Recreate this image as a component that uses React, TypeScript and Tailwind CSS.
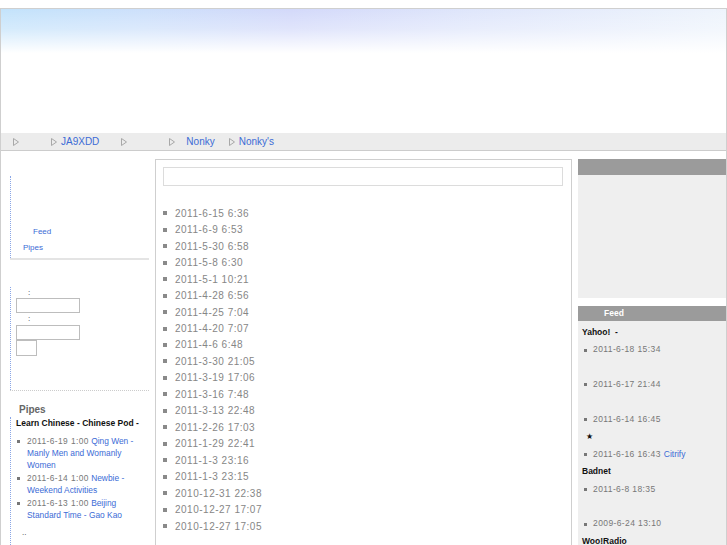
import React from "react";

const centerDates = [
  "2011-6-15 6:36",
  "2011-6-9 6:53",
  "2011-5-30 6:58",
  "2011-5-8 6:30",
  "2011-5-1 10:21",
  "2011-4-28 6:56",
  "2011-4-25 7:04",
  "2011-4-20 7:07",
  "2011-4-6 6:48",
  "2011-3-30 21:05",
  "2011-3-19 17:06",
  "2011-3-16 7:48",
  "2011-3-13 22:48",
  "2011-2-26 17:03",
  "2011-1-29 22:41",
  "2011-1-3 23:16",
  "2011-1-3 23:15",
  "2010-12-31 22:38",
  "2010-12-27 17:07",
  "2010-12-27 17:05",
];

function Tri() {
  return (
    <svg width="6" height="8" viewBox="0 0 6 8" className="shrink-0">
      <polygon points="0.5,0.5 5.5,4 0.5,7.5" fill="none" stroke="#a8a8a8" strokeWidth="1" />
    </svg>
  );
}

export default function App() {
  return (
    <div className="w-[727px] h-[545px] overflow-hidden bg-white pt-[8px] font-['Liberation_Sans',Arial,sans-serif]">
      <div className="border border-[#cfcfcf] h-[600px]">
        {/* header */}
        <div className="h-[124px] bg-[linear-gradient(to_bottom,rgba(255,255,255,0)_0px,rgba(255,255,255,0.3)_20px,#ffffff_44px),linear-gradient(to_right,#c3e3fb_0%,#cde0fb_20%,#d3d9fa_40%,#dfe6fb_65%,#eef4fc_100%)]" />
        {/* nav */}
        <div className="h-[18px] bg-[#ececec] border-b border-[#cccccc] flex items-center text-[10px] text-[#3b6bd6]">
          <span className="ml-[12px]"><Tri /></span>
          <span className="ml-[32px] flex items-center gap-[4px]"><Tri /><span>JA9XDD</span></span>
          <span className="ml-[22px]"><Tri /></span>
          <span className="ml-[42px]"><Tri /></span>
          <span className="ml-[11px]">Nonky</span>
          <span className="ml-[14px] flex items-center gap-[4px]"><Tri /><span>Nonky's</span></span>
        </div>
        {/* body */}
        <div className="flex">
          {/* left column */}
          <div className="w-[154px] shrink-0">
            <div className="mt-[25px] ml-[9px] w-[139px] border-b-2 border-[#e4e4e4]">
              <div className="h-[82px] border-l border-dotted border-[#8aa6e6] pt-[48px] text-[8px] leading-[16px] text-[#3b6bd6]">
                <div className="pl-[22px]">Feed</div>
                <div className="pl-[12px]">Pipes</div>
              </div>
            </div>
            <div className="mt-[27px] ml-[9px] w-[139px] border-b border-dotted border-[#cccccc]">
              <div className="h-[103px] border-l border-dotted border-[#8aa6e6] pt-[1px] text-[8px] text-[#333]">
                <div className="pl-[17px] leading-[10px]">:</div>
                <div className="ml-[5px] w-[64px] h-[15px] border border-[#bdbdbd]" />
                <div className="pl-[17px] leading-[12px]">:</div>
                <div className="ml-[5px] w-[64px] h-[15px] border border-[#bdbdbd]" />
                <div className="ml-[5px] w-[21px] h-[16px] border border-[#bdbdbd]" />
              </div>
            </div>
            <div className="mt-[12px] ml-[18px] text-[10px] font-bold text-[#666] leading-[14px]">Pipes</div>
            <div className="ml-[9px] border-l border-dotted border-[#8aa6e6] h-[200px] pl-[5px]">
              <div className="text-[8.5px] font-bold text-[#111] leading-[12px]">Learn Chinese - Chinese Pod -</div>
              <div className="mt-[6px] w-[118px] flex flex-col gap-[1px]">
                {[
                  ["2011-6-19 1:00", "Qing Wen - Manly Men and Womanly Women"],
                  ["2011-6-14 1:00", "Newbie - Weekend Activities"],
                  ["2011-6-13 1:00", "Beijing Standard Time - Gao Kao"],
                ].map(([d, t]) => (
                  <div key={d} className="flex items-start">
                    <span className="ml-[1px] mt-[5px] w-[3px] h-[3px] bg-[#777] shrink-0" />
                    <p className="ml-[7px] text-[8.4px] leading-[12px]">
                      <span className="text-[#777] tracking-[0.4px]">{d}</span>{" "}
                      <span className="text-[#3b6bd6]">{t}</span>
                    </p>
                  </div>
                ))}
              </div>
              <div className="mt-[6px] pl-[6px] text-[8px] text-[#333] leading-[12px]">..</div>
            </div>
          </div>
          {/* center */}
          <div className="mt-[8px] w-[417px] shrink-0 border border-[#cfcfcf] h-[420px] px-[7px] pt-[7px]">
            <div className="w-[400px] h-[19px] border border-[#dcdcdc]" />
            <div className="mt-[19px] flex flex-col">
              {centerDates.map((d, i) => (
                <div key={i} className="flex items-center h-[16.47px]">
                  <span className="w-[4px] h-[4px] bg-[#8a8a8a] shrink-0" />
                  <span className="ml-[8px] text-[10px] tracking-[0.5px] text-[#868686]">{d}</span>
                </div>
              ))}
            </div>
          </div>
          {/* right column */}
          <div className="ml-[6px] w-[148px] shrink-0 mt-[8px]">
            <div className="h-[16px] bg-[#9b9b9b]" />
            <div className="h-[123px] bg-[#efefef]" />
            <div className="mt-[8px] h-[15px] bg-[#9b9b9b] text-white font-bold text-[8.5px] leading-[15px] pl-[26px]">Feed</div>
            <div className="bg-[#efefef] h-[300px] pl-[4px] pt-[3px] text-[8.5px] leading-[17.4px]">
              <div className="font-bold text-[#111]">Yahoo!&nbsp;&nbsp;-</div>
              {[
                ["2011-6-18 15:34", true],
                ["2011-6-17 21:44", true],
                ["2011-6-14 16:45", false],
              ].map(([d, blank]) => (
                <div key={d as string}>
                  <div className="flex items-center">
                    <span className="ml-[2px] w-[3px] h-[3px] bg-[#777] shrink-0" />
                    <span className="ml-[6px] text-[#777] tracking-[0.4px]">{d}</span>
                  </div>
                  {blank ? <div className="h-[17.4px]" /> : null}
                </div>
              ))}
              <div className="pl-[4px] text-[8px] text-[#111]">★</div>
              <div className="flex items-center">
                <span className="ml-[2px] w-[3px] h-[3px] bg-[#777] shrink-0" />
                <span className="ml-[6px] text-[#777] tracking-[0.4px]">2011-6-16 16:43</span>
                <span className="ml-[3px] text-[#3b6bd6]">Citrify</span>
              </div>
              <div className="font-bold text-[#111]">Badnet</div>
              <div className="flex items-center">
                <span className="ml-[2px] w-[3px] h-[3px] bg-[#777] shrink-0" />
                <span className="ml-[6px] text-[#777] tracking-[0.4px]">2011-6-8 18:35</span>
              </div>
              <div className="h-[17.4px]" />
              <div className="flex items-center">
                <span className="ml-[2px] w-[3px] h-[3px] bg-[#777] shrink-0" />
                <span className="ml-[6px] text-[#777] tracking-[0.4px]">2009-6-24 13:10</span>
              </div>
              <div className="font-bold text-[#111]">Woo!Radio</div>
            </div>
          </div>
        </div>
      </div>
    </div>
  );
}
